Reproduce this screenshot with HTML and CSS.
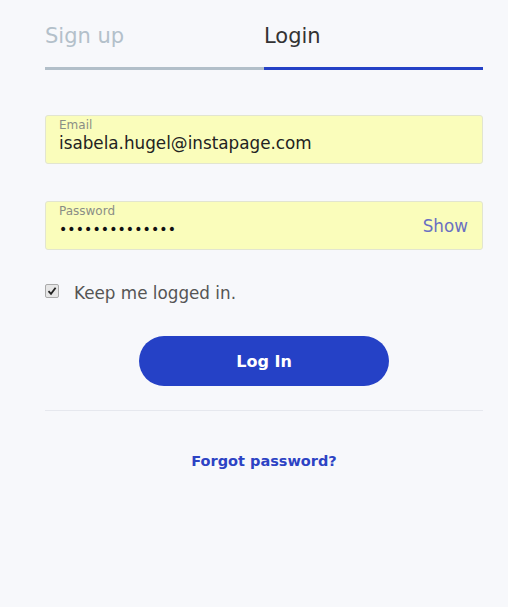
FILE: index.html
```html
<!DOCTYPE html>
<html>
<head>
<meta charset="utf-8">
<link rel="stylesheet" href="styles.css">
</head>
<body>
<div class="wrap">
  <div class="tabs">
    <div class="tab tab-off">Sign up</div>
    <div class="tab tab-on">Login</div>
  </div>
  <form class="form">
    <div class="field">
      <div class="label">Email</div>
      <div class="value">isabela.hugel@instapage.com</div>
    </div>
    <div class="field field-pw">
      <div class="field-main">
        <div class="label">Password</div>
        <div class="value dots">••••••••••••••</div>
      </div>
      <div class="show">Show</div>
    </div>
    <label class="keep">
      <span class="check"><svg width="10" height="10" viewBox="0 0 10 10"><path d="M1.5 5.2 L4 7.8 L8.6 1.8" fill="none" stroke="#222" stroke-width="1.8"/></svg></span>
      <span>Keep me logged in.</span>
    </label>
    <div class="btn-row"><button type="button" class="btn">Log In</button></div>
  </form>
  <div class="divider"></div>
  <div class="forgot">Forgot password?</div>
</div>
</body>
</html>
```
FILE: styles.css
```css
html, body { margin: 0; padding: 0; }
body {
  background: #f7f8fb;
  font-family: "DejaVu Sans", "Open Sans", sans-serif;
  width: 508px;
  height: 607px;
  overflow: hidden;
}
.wrap {
  margin-left: 45px;
  width: 438px;
}
.tabs {
  display: flex;
  padding-top: 22px;
}
.tab {
  flex: 1;
  font-size: 21px;
  line-height: 29px;
  padding-bottom: 16px;
  border-bottom: 3px solid #b2bfc9;
}
.tab-off { color: #b3c0ca; }
.tab-on { color: #333; border-bottom-color: #2541c6; }
.form {
  display: flex;
  flex-direction: column;
  padding-top: 45px;
}
.field {
  height: 47px;
  background: #fafdbb;
  border: 1px solid #e2e5d0;
  border-radius: 3px;
  padding: 0 13px;
  display: flex;
  flex-direction: column;
}
.label {
  font-size: 12px;
  line-height: 14px;
  color: #8a8e86;
  margin-top: 2px;
}
.value {
  font-size: 16.8px;
  line-height: 22px;
  color: #222;
}
.field-pw {
  margin-top: 37px;
  flex-direction: row;
  align-items: center;
}
.field-main { flex: 1; display: flex; flex-direction: column; align-self: stretch; }
.dots { letter-spacing: 0.1px; color: #111; font-size: 14px; }
.show {
  font-size: 16.8px;
  color: #6a70c2;
  padding-right: 1px;
}
.keep {
  display: flex;
  align-items: center;
  margin-top: 33px;
  font-size: 16.8px;
  color: #555;
}
.check {
  width: 12px;
  height: 12px;
  border: 1px solid #aaa;
  border-radius: 2px;
  background: #e6e6e6;
  display: flex;
  align-items: center;
  justify-content: center;
  margin-right: 15px;
  margin-top: -4px;
}
.btn-row { display: flex; justify-content: center; margin-top: 33px; }
.btn {
  width: 250px;
  height: 50px;
  border: none;
  border-radius: 25px;
  background: #2541c6;
  color: #fff;
  font-family: inherit;
  font-size: 16px;
  font-weight: 700;
}
.divider {
  margin-top: 24px;
  height: 1px;
  background: #e6e8ee;
}
.forgot {
  margin-top: 42px;
  text-align: center;
  font-size: 14.5px;
  font-weight: 700;
  color: #2d43c4;
}
```
